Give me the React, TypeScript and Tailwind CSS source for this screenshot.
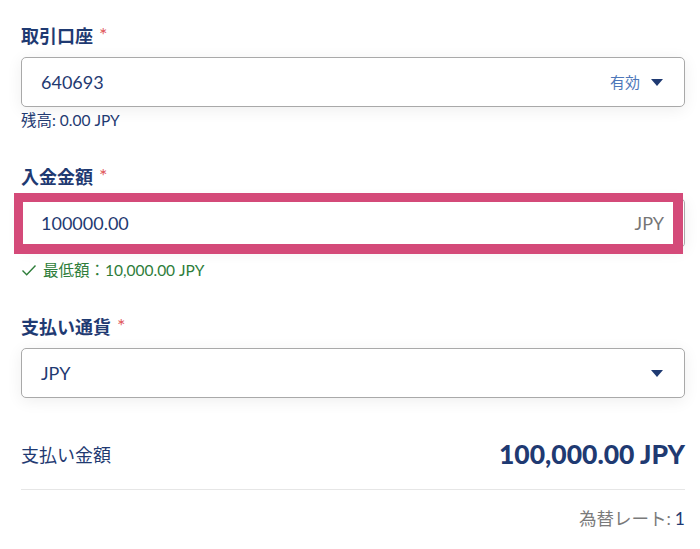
import React from "react";

const font = { fontFamily: '"Lato", "Noto Sans CJK JP", sans-serif' };

function Caret() {
  return (
    <svg width="12" height="7" viewBox="0 0 12 7" className="text-[#1f3a72]">
      <path d="M0 0h12L6 7z" fill="currentColor" />
    </svg>
  );
}

function Label({ text }: { text: string }) {
  return (
    <div className="flex items-center h-6 mb-[9px] text-[18px] font-bold text-[#1f3a72]">
      {text}
      <span className="ml-[6px] text-[20px] font-normal text-[#e0575b] leading-none -translate-y-[2px]">*</span>
    </div>
  );
}

export default function App() {
  return (
    <div className="min-h-[549px] bg-white pl-[21px] pr-[15px] pt-6" style={font}>
      {/* 取引口座 */}
      <Label text="取引口座" />
      <div className="flex items-center h-[50px] pl-[19px] pr-[21px] border border-[#a9a9a9] rounded-[5px] bg-white shadow-[0_3px_16px_rgba(0,0,0,0.07)]">
        <span className="flex-1 text-[18px] text-[#1f3a72]">640693</span>
        <span className="text-[15px] text-[#4d77b9] mr-[11px]">有効</span>
        <Caret />
      </div>
      <div className="h-5 mt-[3px] text-[15.5px] leading-5 text-[#1f3a72]">残高: 0.00 JPY</div>

      {/* 入金金額 */}
      <div className="mt-[35px]">
        <Label text="入金金額" />
      </div>
      <div className="relative">
        <div className="flex items-center h-[50px] mt-[1px] pl-[19px] pr-[20px] border border-[#a9a9a9] rounded-[5px] bg-white shadow-[0_3px_16px_rgba(0,0,0,0.07)]">
          <span className="flex-1 text-[18px] text-[#1f3a72]">100000.00</span>
          <span className="text-[18px] text-[#767676]">JPY</span>
        </div>
        <div className="absolute left-[-7px] right-[2px] top-[-5px] bottom-[-6px] border-t-[9px] border-l-[9px] border-b-[10px] border-r-[10px] border-[#d44a79]" />
      </div>
      <div className="flex items-center h-5 mt-[12px] text-[15.5px] leading-5 text-[#2e7d3a]">
        <svg width="16" height="12" viewBox="0 0 16 12" className="mr-[6px]">
          <path d="M1.5 6.5l4.2 4.2L14.5 1.5" fill="none" stroke="currentColor" strokeWidth="1.4" />
        </svg>
        最低額：10,000.00 JPY
      </div>

      {/* 支払い通貨 */}
      <div className="mt-[35px]">
        <Label text="支払い通貨" />
      </div>
      <div className="flex items-center h-[50px] pl-[19px] pr-[21px] border border-[#a9a9a9] rounded-[5px] bg-white shadow-[0_3px_16px_rgba(0,0,0,0.07)]">
        <span className="flex-1 text-[18px] text-[#1f3a72]">JPY</span>
        <Caret />
      </div>

      {/* 支払い金額 */}
      <div className="flex items-center justify-between h-9 mt-[39px] pb-4 border-b border-[#e6e6e6] box-content">
        <span className="text-[18px] text-[#1f3a72]">支払い金額</span>
        <span className="text-[26.5px] font-black text-[#1f3a72]">100,000.00 JPY</span>
      </div>
      <div className="flex justify-end h-[22px] mt-[18px] text-[17.5px] leading-[22px] text-[#7a7a7a]">
        為替レート: <span className="ml-1 text-[#1f3a72]">1</span>
      </div>
    </div>
  );
}
